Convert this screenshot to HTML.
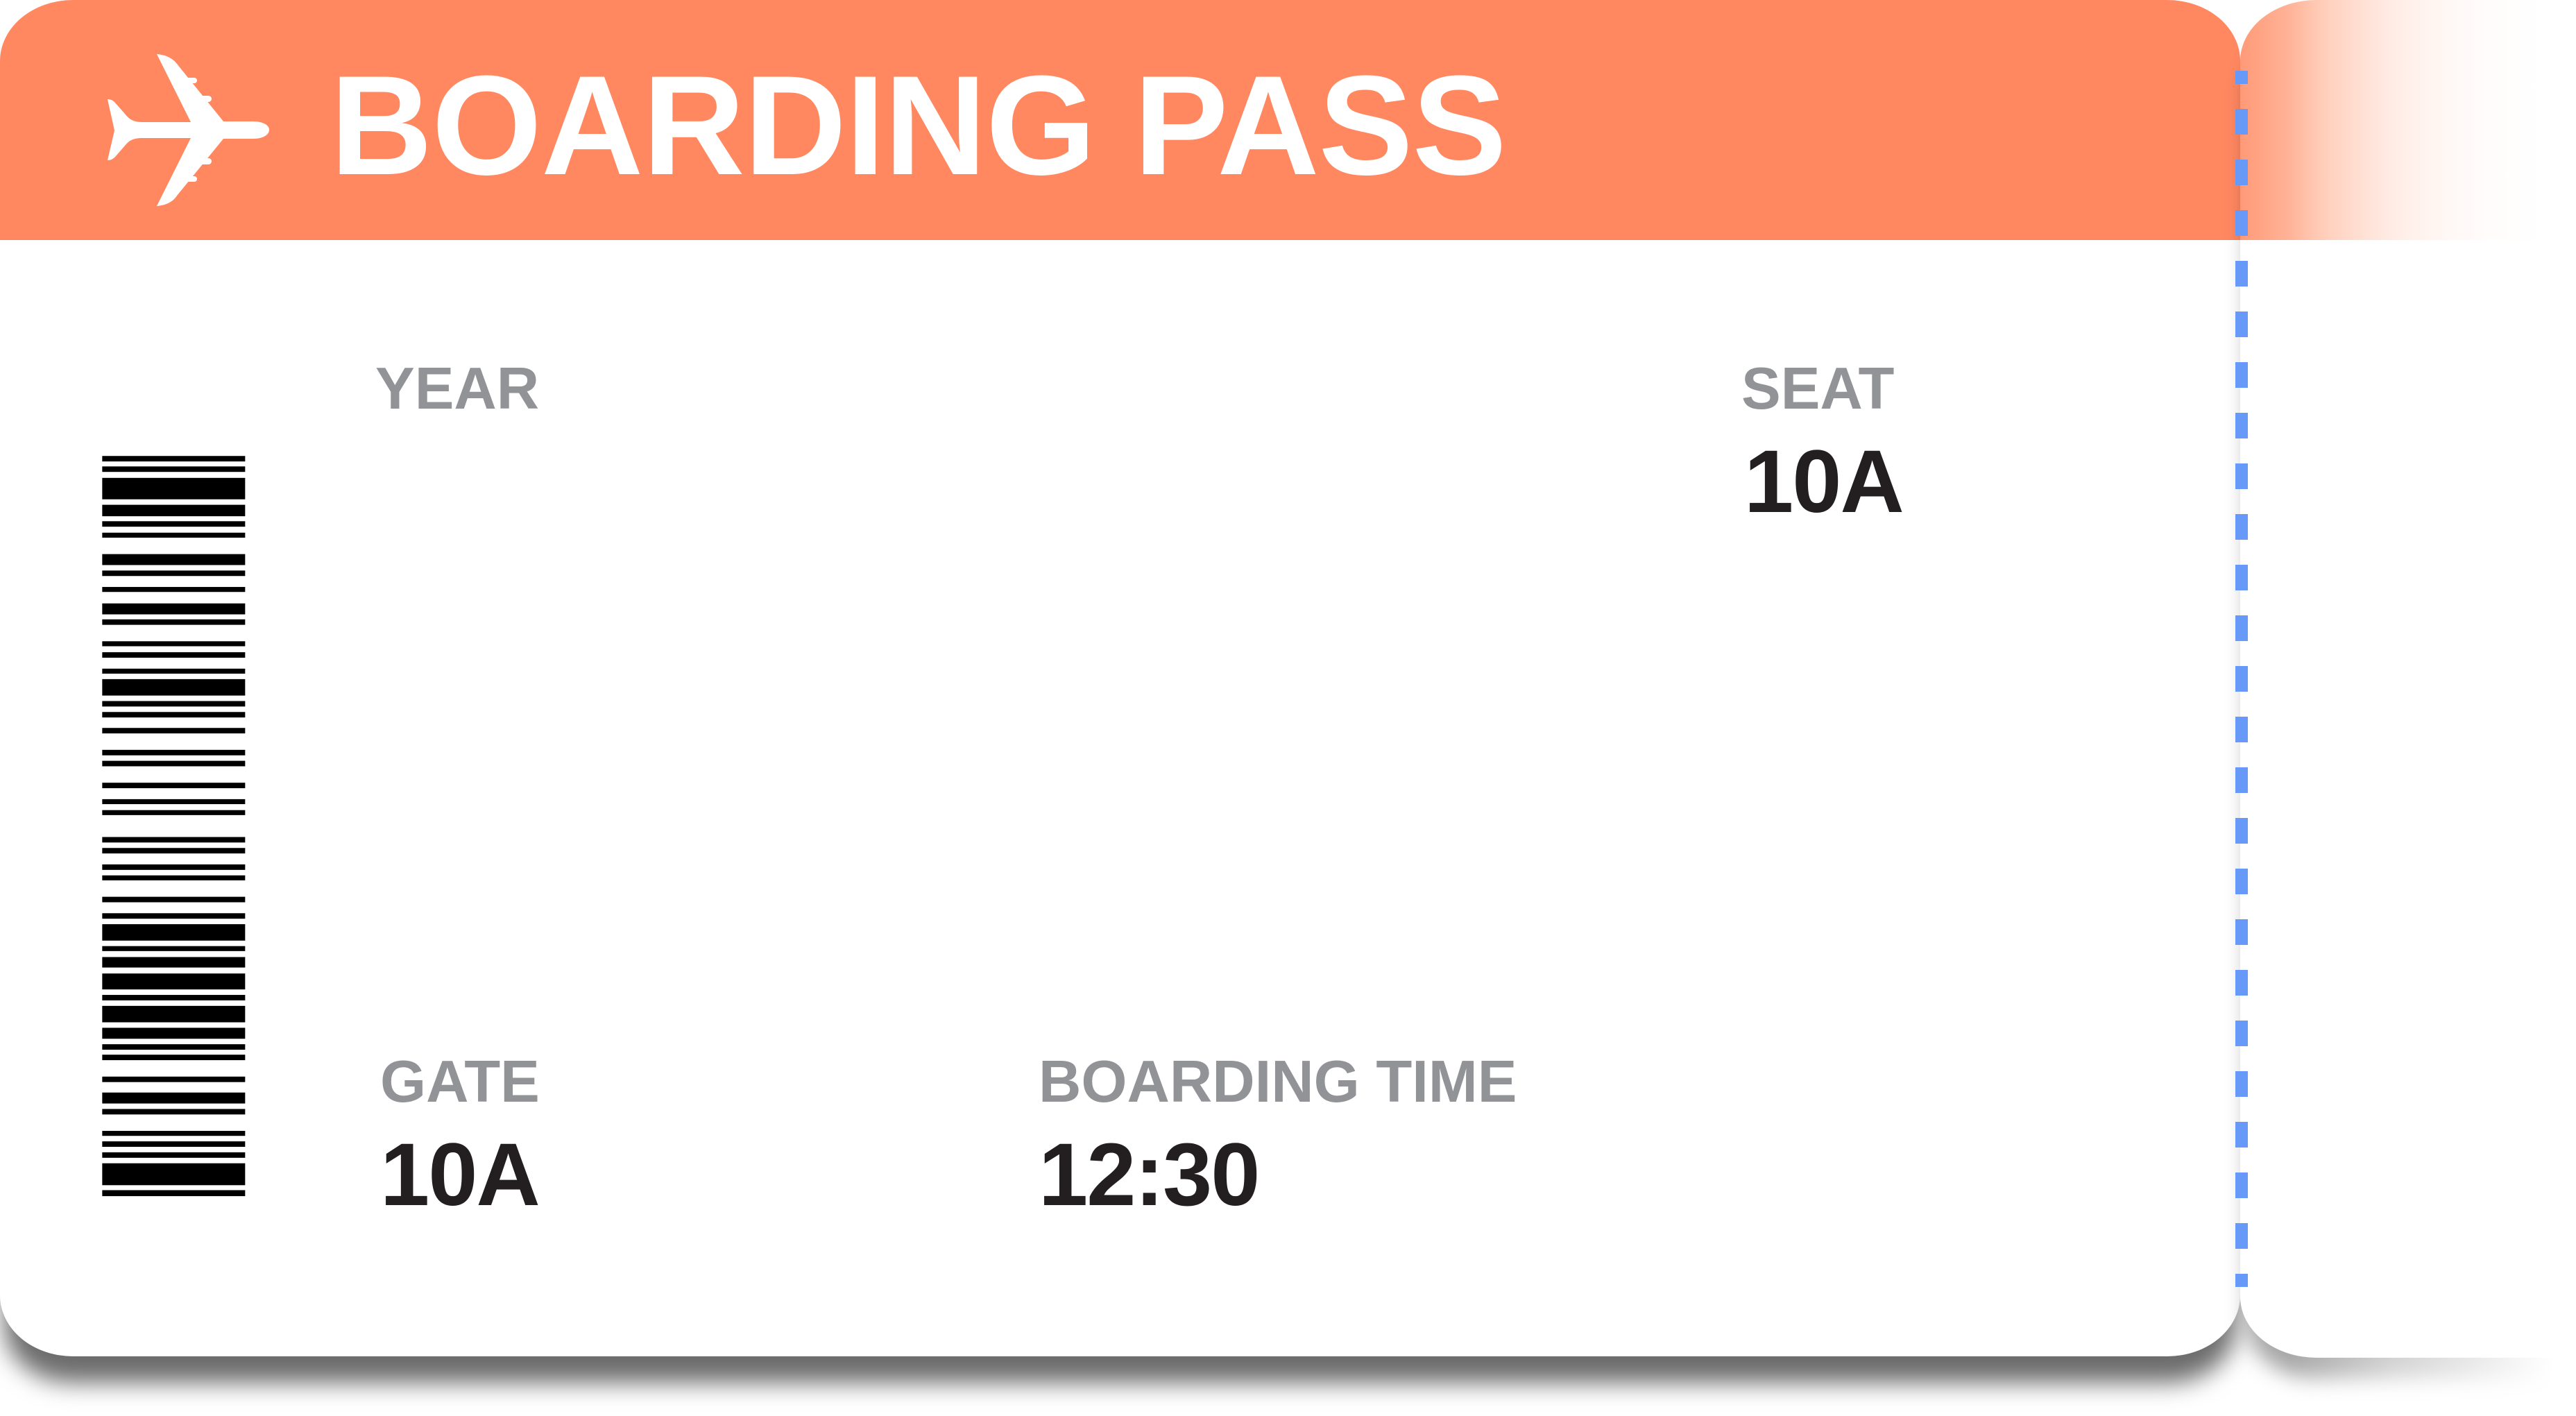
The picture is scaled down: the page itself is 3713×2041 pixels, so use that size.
<!DOCTYPE html>
<html><head><meta charset="utf-8"><style>
html,body{margin:0;padding:0;background:#fff;}
body{width:3713px;height:2041px;position:relative;overflow:hidden;font-family:"Liberation Sans",Arial,sans-serif;}
.card{position:absolute;left:0;top:0;width:3229px;height:1955px;background:#fff;border-radius:105px/88px;box-shadow:0 44px 34px -6px rgba(0,0,0,0.58);overflow:hidden;z-index:1;}
.hdr{position:absolute;left:0;top:0;width:100%;height:346px;background:#ff8861;}
.stub{position:absolute;left:3229px;top:0;width:700px;height:1957px;background:#fff;border-radius:110px/88px;overflow:hidden;box-shadow:0 40px 30px -10px rgba(0,0,0,0.35);z-index:2;}
.stubhdr{position:absolute;left:0;top:0;width:100%;height:346px;background:linear-gradient(90deg,#ff9a78 0px,#ffc4ad 120px,#ffe9e1 300px,#fff 480px);}
.fade{position:absolute;left:3300px;top:0;width:413px;height:2041px;background:linear-gradient(90deg,rgba(255,255,255,0) 0,rgba(255,255,255,0.5) 150px,#fff 380px);z-index:3;}
.t{position:absolute;white-space:nowrap;line-height:1;font-weight:bold;}
.lab{font-size:85px;color:#929397;}
.val{font-size:128px;color:#231f20;letter-spacing:-2px;}
.dash{position:absolute;left:3222px;top:102px;width:18px;height:1753px;z-index:4;background:repeating-linear-gradient(180deg,#6699f8 0,#6699f8 19px,transparent 19px,transparent 55px,#6699f8 55px,#6699f8 73px);}
</style></head><body>
<div class="stub"><div class="stubhdr"></div></div>
<div class="card">
  <div class="hdr"></div>
  <svg style="position:absolute;left:0;top:0" width="420" height="346" viewBox="0 0 420 346">
    <path fill="#fff" d="M388,187 C388,180 378,175 365,175 L322,175 L255,92 C250,85 240,79 226,78 L275,176 L205,176 C190,176 185,170 180,164 L165,147 C162,144 158,143 155,143 L165,188 L155,231 C160,231 163,229 166,226 L180,210 C185,204 190,199 205,199 L275,199 L226,297 C240,296 250,290 255,282 L322,200 L365,200 C378,200 388,195 388,187 Z"/>
    <rect x="268" y="112" width="16" height="8" rx="4" fill="#fff"/>
    <rect x="288" y="138" width="17" height="9" rx="4.5" fill="#fff"/>
    <rect x="288" y="228" width="17" height="9" rx="4.5" fill="#fff"/>
    <rect x="268" y="254" width="16" height="8" rx="4" fill="#fff"/>
  </svg>
  <div class="t" style="left:476px;top:79px;font-size:204px;color:#fff;letter-spacing:-1px;">BOARDING PASS</div>
  <div class="t lab" style="left:541px;top:518px;">YEAR</div>
  <div class="t lab" style="left:2510px;top:518px;">SEAT</div>
  <div class="t val" style="left:2514px;top:631px;">10A</div>
  <div class="t lab" style="left:548px;top:1517px;">GATE</div>
  <div class="t val" style="left:548px;top:1630px;">10A</div>
  <div class="t lab" style="left:1497px;top:1517px;">BOARDING TIME</div>
  <div class="t val" style="left:1497px;top:1630px;">12:30</div>
  <svg style="position:absolute;left:130px;top:640px" width="250" height="1120" viewBox="0 0 750 1560" preserveAspectRatio="none">
    <g fill="#000">
      <rect x="52" y="24" width="618" height="11"/><rect x="52" y="45" width="618" height="11"/><rect x="52" y="68" width="618" height="43"/><rect x="52" y="122" width="618" height="23"/><rect x="52" y="155" width="618" height="11"/><rect x="52" y="178" width="618" height="10"/><rect x="52" y="221" width="618" height="22"/><rect x="52" y="254" width="618" height="11"/><rect x="52" y="287" width="618" height="10"/><rect x="52" y="320" width="618" height="22"/><rect x="52" y="352" width="618" height="11"/><rect x="52" y="396" width="618" height="10"/><rect x="52" y="418" width="618" height="11"/><rect x="52" y="451" width="618" height="10"/><rect x="52" y="472" width="618" height="33"/><rect x="52" y="516" width="618" height="11"/><rect x="52" y="538" width="618" height="11"/><rect x="52" y="570" width="618" height="11"/><rect x="52" y="614" width="618" height="11"/><rect x="52" y="636" width="618" height="11"/><rect x="52" y="680" width="618" height="11"/><rect x="52" y="713" width="618" height="10"/><rect x="52" y="735" width="618" height="10"/><rect x="52" y="789" width="618" height="11"/><rect x="52" y="811" width="618" height="11"/><rect x="52" y="844" width="618" height="11"/><rect x="52" y="866" width="618" height="10"/><rect x="52" y="909" width="618" height="11"/><rect x="52" y="942" width="618" height="11"/><rect x="52" y="964" width="618" height="33"/><rect x="52" y="1008" width="618" height="10"/><rect x="52" y="1030" width="618" height="21"/><rect x="52" y="1063" width="618" height="32"/><rect x="52" y="1106" width="618" height="11"/><rect x="52" y="1128" width="618" height="33"/><rect x="52" y="1172" width="618" height="22"/><rect x="52" y="1205" width="618" height="11"/><rect x="52" y="1226" width="618" height="11"/><rect x="52" y="1270" width="618" height="11"/><rect x="52" y="1302" width="618" height="22"/><rect x="52" y="1335" width="618" height="11"/><rect x="52" y="1379" width="618" height="10"/><rect x="52" y="1400" width="618" height="11"/><rect x="52" y="1422" width="618" height="11"/><rect x="52" y="1444" width="618" height="44"/><rect x="52" y="1498" width="618" height="12"/>
    </g>
  </svg>
</div>
<div class="fade"></div>
<div class="dash"></div>
</body></html>
